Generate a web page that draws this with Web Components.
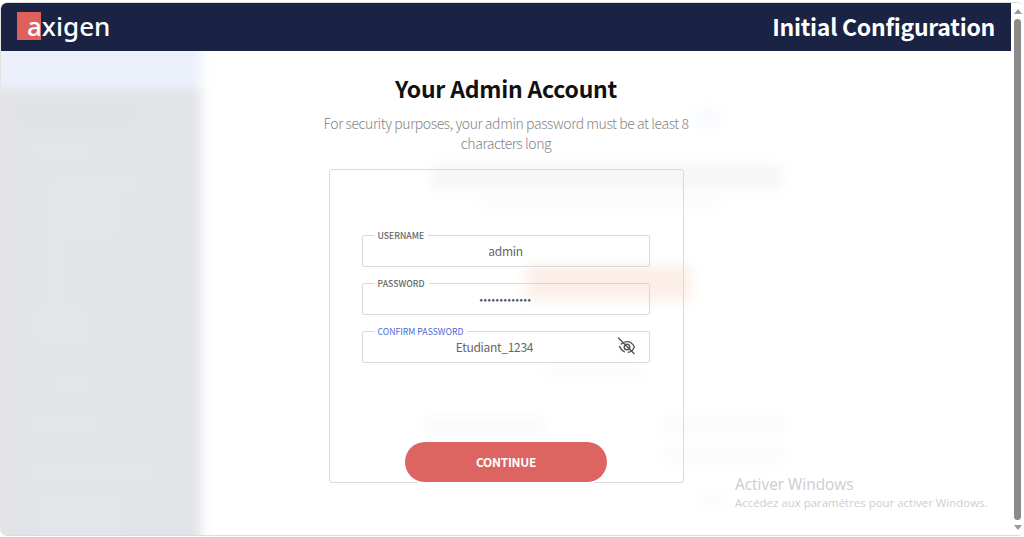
<!DOCTYPE html>
<html lang="en">
<head>
<meta charset="utf-8">
<title>Axigen - Initial Configuration</title>
<style>
  html, body { margin: 0; height: 100%; background: #fff; overflow: hidden; }
  body { font-family: "Noto Sans CJK JP", "Noto Sans", sans-serif; }
</style>
</head>
<body>
<ax-window>
  <ax-header slot="header" title-text="Initial Configuration"></ax-header>
  <ax-backdrop slot="backdrop"></ax-backdrop>
  <ax-dialog slot="dialog" heading="Your Admin Account">
    <span slot="intro">For security purposes, your admin password must be at least 8<br>characters long</span>
    <ax-field label="USERNAME" value="admin"></ax-field>
    <ax-field label="PASSWORD" value="•••••••••••••" masked></ax-field>
    <ax-field label="CONFIRM PASSWORD" value="Etudiant_1234" focused></ax-field>
    <ax-button slot="action">CONTINUE</ax-button>
  </ax-dialog>
  <ax-watermark slot="dialog"></ax-watermark>
  <ax-scrollbar slot="scrollbar"></ax-scrollbar>
</ax-window>

<script>
(function() {
  // open shadow root helper
  function shadow(el, html) {
    el.attachShadow({ mode: 'open' });
    el.shadowRoot.innerHTML = html;
  }

  class AxWindow extends HTMLElement {
    constructor() {
      super();
      shadow(this, `
        <style>
          :host {
            display: grid;
            grid-template-columns: 1fr 12px;
            height: 534px;
            margin-top: 2px;
            box-sizing: border-box;
            border-top: 1px solid #dcdcdc;
            border-bottom: 1px solid #dcdcdc;
            border-left: 1px solid #e4e4e4;
            border-radius: 7px;
            overflow: hidden;
          }
          .pane { display: flex; flex-direction: column; min-width: 0; min-height: 0; margin-right: 1px; }
          .body { position: relative; flex: 1; overflow: hidden; }
          .over { position: absolute; inset: 0; }
        </style>
        <div class="pane">
          <slot name="header"></slot>
          <div class="body">
            <slot name="backdrop"></slot>
            <div class="over"><slot name="dialog"></slot></div>
          </div>
        </div>
        <slot name="scrollbar"></slot>
      `);
    }
  }

  class AxHeader extends HTMLElement {
    constructor() {
      super();
      shadow(this, `
        <style>
          :host {
            display: flex;
            align-items: center;
            justify-content: space-between;
            height: 48px;
            padding: 0 16px 0 26px;
            background: #1b2345;
            color: #fff;
          }
          .logo {
            position: relative;
            font: 500 26px/1 "Noto Sans", sans-serif;
            margin-top: -2px;
          }
          .logo::before {
            content: "";
            position: absolute;
            left: -10px; top: -1px;
            width: 24px; height: 28px;
            background: #e0605c;
          }
          .logo span { position: relative; }
          h1 { margin: -2px 0 0; font-size: 23px; font-weight: 700; line-height: 1; letter-spacing: -0.27px; }
        </style>
        <div class="logo"><span>axigen</span></div>
        <h1></h1>
      `);
    }
    connectedCallback() {
      this.shadowRoot.querySelector('h1').textContent = this.getAttribute('title-text');
    }
  }

  // blurred page behind the dialog: [y, x, w, h, colour], y from the top of the body
  const SIDE = [
    [-12, -12, 212, 50, '#ebf0fb'],
    [52, 20, 110, 16, '#e0e1e5'],
    [92, 32, 60, 16, '#e5e6e9'],
    [129, 48, 94, 12, '#e5e6e9'],
    [141, 40, 80, 48, '#e4e5e8'],
    [189, 40, 25, 60, '#e4e5e8'],
    [254, 35, 50, 40, '#e5e6e9'],
    [324, 48, 47, 13, '#e5e6e9'],
    [364, 35, 62, 17, '#e6e7e9'],
    [411, 30, 125, 16, '#e5e6e9'],
    [444, 40, 80, 35, '#e5e6e9']
  ];
  const MAIN = [
    [57, 495, 22, 20, '#f8fafd'],
    [114, 230, 350, 24, '#f6f6f6'],
    [146, 280, 240, 10, '#fbfbfb'],
    [214, 325, 165, 36, '#fcefe9'],
    [318, 345, 95, 10, '#fafafa'],
    [368, 225, 120, 12, '#f8f8f8'],
    [368, 460, 125, 12, '#fafafa'],
    [398, 460, 125, 12, '#fbfbfb'],
    [445, 500, 22, 12, '#fafbfd']
  ];

  class AxBackdrop extends HTMLElement {
    constructor() {
      super();
      shadow(this, `
        <style>
          :host {
            display: flex;
            height: calc(100% + 24px);
            margin: -12px 0 -12px -12px;
            filter: blur(6px);
          }
          .side { flex: 0 0 212px; background: #e2e3e7; }
          .main { flex: 1; background: #fff; padding-top: 12px; }
          i { display: block; }
        </style>
        <div class="side"></div>
        <div class="main"></div>
      `);
      this.fill('.side', SIDE, 12, -12);
      this.fill('.main', MAIN, 0, 0);
    }
    fill(sel, rows, shift, start) {
      let prev = start;
      let html = '';
      rows.forEach(([y, x, w, h, c]) => {
        html += `<i style="margin:${y - prev}px 0 0 ${x + shift}px;width:${w}px;height:${h}px;background:${c}"></i>`;
        prev = y + h;
      });
      this.shadowRoot.querySelector(sel).innerHTML = html;
    }
  }

  class AxDialog extends HTMLElement {
    constructor() {
      super();
      shadow(this, `
        <style>
          :host {
            display: flex;
            flex-direction: column;
            align-items: center;
            height: 100%;
            padding-top: 21px;
            box-sizing: border-box;
          }
          h2 { margin: 0; font-size: 23px; line-height: 32px; font-weight: 700; letter-spacing: -0.22px; color: #111; }
          p {
            margin: 9px 0 0;
            font-size: 14px;
            line-height: 20px;
            font-weight: 300;
            letter-spacing: -0.42px;
            color: #858585;
            text-align: center;
          }
          .card {
            box-sizing: border-box;
            width: 355px;
            height: 314px;
            margin-top: 16px;
            padding: 60px 33px 0 32px;
            border: 1px solid #d9d9d9;
            border-radius: 3px;
            display: flex;
            flex-direction: column;
            align-items: stretch;
          }
          ::slotted(ax-field) { margin-bottom: 11px; }
          .action { margin: auto -1px 0 0; display: flex; justify-content: center; }
        </style>
        <h2></h2>
        <p><slot name="intro"></slot></p>
        <div class="card">
          <slot></slot>
          <div class="action"><slot name="action"></slot></div>
        </div>
      `);
    }
    connectedCallback() {
      this.shadowRoot.querySelector('h2').textContent = this.getAttribute('heading');
    }
  }

  class AxField extends HTMLElement {
    constructor() {
      super();
      shadow(this, `
        <style>
          :host { display: block; }
          fieldset {
            margin: 0;
            padding: 0 14px 0 14px;
            height: 37px;
            box-sizing: border-box;
            border: 1px solid #d9d9d9;
            border-radius: 2px;
            display: flex;
            align-items: center;
            min-width: 0;
          }
          legend {
            margin-left: -3px;
            padding: 2px 4px 0;
            font-size: 8.7px;
            line-height: 1;
            font-weight: 500;
            color: #666;
            white-space: nowrap;
          }
          .value {
            flex: 1;
            margin-bottom: 5px;
            text-align: center;
            font-size: 12px;
            font-weight: 400;
            letter-spacing: -0.3px;
            color: #666;
            line-height: 20px;
          }
          :host([masked]) .value { font-size: 10px; letter-spacing: 0.6px; color: #555; }
          :host([focused]) legend { color: #4a68d8; font-weight: 400; }
          svg { flex: 0 0 18px; margin: 0 0 6px 4px; }
        </style>
        <fieldset>
          <legend></legend>
          <div class="value"></div>
        </fieldset>
      `);
    }
    connectedCallback() {
      const root = this.shadowRoot;
      root.querySelector('legend').textContent = this.getAttribute('label');
      root.querySelector('.value').textContent = this.getAttribute('value');
      if (this.hasAttribute('focused')) {
        root.querySelector('fieldset').insertAdjacentHTML('beforeend', `
          <svg width="18" height="18" viewBox="0 0 18 18" fill="none" stroke="#555" stroke-width="1.4" stroke-linecap="round">
            <path d="M4.2 7 C6 5.3 8 4.6 10 4.6 C13 4.6 15.8 6.6 17.4 10 C15.8 13.4 13.6 15 11.4 15.3"/>
            <path d="M2.4 9.4 C3.4 11.6 5 13.6 7.4 14.8"/>
            <circle cx="10" cy="10" r="2.8"/>
            <path d="M1.4 1 L17 16.6"/>
          </svg>`);
      }
    }
  }

  class AxButton extends HTMLElement {
    constructor() {
      super();
      shadow(this, `
        <style>
          :host {
            display: flex;
            align-items: center;
            justify-content: center;
            box-sizing: border-box;
            width: 202px;
            height: 40px;
            padding-bottom: 1px;
            border-radius: 20px;
            background: #dc6461;
            color: #fff;
            font-size: 12px;
            font-weight: 700;
            letter-spacing: -0.3px;
            box-shadow: 0 0 0 2px #fff;
          }
        </style>
        <slot></slot>
      `);
    }
  }

  class AxWatermark extends HTMLElement {
    constructor() {
      super();
      shadow(this, `
        <style>
          :host {
            position: absolute;
            left: 734px;
            top: 423px;
            font-family: "Open Sans", sans-serif;
            color: #cdcdcd;
          }
          div { font-size: 15.4px; line-height: 21px; }
          small { display: block; font-size: 11.45px; line-height: 16px; white-space: nowrap; }
        </style>
        <div>Activer Windows</div>
        <small>Accédez aux paramètres pour activer Windows.</small>
      `);
    }
  }

  class AxScrollbar extends HTMLElement {
    constructor() {
      super();
      shadow(this, `
        <style>
          :host {
            display: flex;
            flex-direction: column;
            align-items: center;
            padding: 6px 1px 5px 0;
            box-sizing: border-box;
            background: #fff;
            min-height: 0;
          }
          .up, .down { width: 0; height: 0; border: 4px solid transparent; }
          .up { border-top: 0; border-bottom: 5px solid #9a9a9a; margin-bottom: 5px; }
          .down { border-bottom: 0; border-top: 5px solid #9a9a9a; margin-top: 5px; }
          .thumb { flex: 1; width: 7px; border-radius: 4px; background: #8b8b8b; }
        </style>
        <div class="up"></div>
        <div class="thumb"></div>
        <div class="down"></div>
      `);
    }
  }

  customElements.define('ax-window', AxWindow);
  customElements.define('ax-header', AxHeader);
  customElements.define('ax-backdrop', AxBackdrop);
  customElements.define('ax-dialog', AxDialog);
  customElements.define('ax-field', AxField);
  customElements.define('ax-button', AxButton);
  customElements.define('ax-watermark', AxWatermark);
  customElements.define('ax-scrollbar', AxScrollbar);
})();
</script>
</body>
</html>
